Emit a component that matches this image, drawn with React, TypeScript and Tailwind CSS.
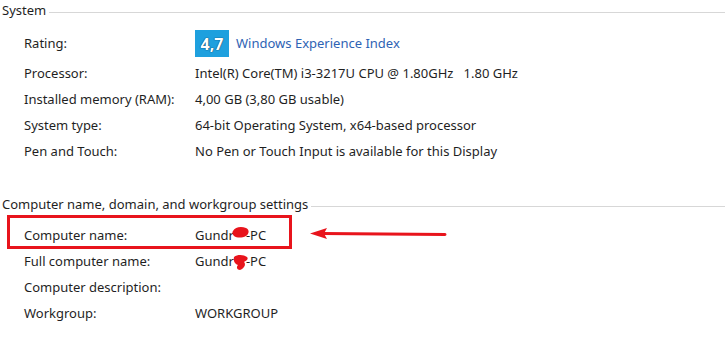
import React from 'react';

/* ── Section heading with a rule ── */
function Heading({ title, className }: { title: string; className?: string }) {
  return (
    <div className={`flex items-center h-[22px] ${className ?? ''}`}>
      <span className="pl-[2px] pr-[3px] text-[#1f1f1f]">{title}</span>
      <div className="flex-1 h-px bg-[#d7d7d7] mt-[2px]" />
    </div>
  );
}

/* ── Label / value row ── */
function Row({ label, children }: { label: string; children?: React.ReactNode }) {
  return (
    <div className="grid grid-cols-[171px_1fr] items-center h-[26px] pl-[24px] text-[#1f1f1f]">
      <span>{label}</span>
      <span className="relative">{children}</span>
    </div>
  );
}

/* red marker blot hiding part of the name */
function Blot({ className, d }: { className: string; d: string }) {
  return (
    <svg className={`absolute ${className}`} width="20" height="18" viewBox="0 0 20 18">
      <path d={d} fill="#e8141c" />
    </svg>
  );
}

function MaskedName({ blot, d }: { blot: string; d: string }) {
  return (
    <>
      Gundr<span className="inline-block w-[12px]" />-PC
      <Blot className={blot} d={d} />
    </>
  );
}

export default function App() {
  return (
    <div
      className="relative w-[725px] h-[343px] bg-white overflow-hidden text-[13px]"
      style={{ fontFamily: '"Noto Sans", "Open Sans", sans-serif' }}
    >
      <Heading title="System" />

      <div className="grid grid-cols-[171px_1fr] items-center h-[27px] pl-[24px] mt-[8px] text-[#1f1f1f]">
        <span>Rating:</span>
        <span className="flex items-center gap-[7px]">
          <span className="w-[34px] h-[27px] bg-[#1ea0de] text-white font-bold text-[16px] flex items-center justify-center [text-shadow:0_0_1px_#0b3f66,0_0_1px_#0b3f66]">
            4,7
          </span>
          <span className="text-[#2e63b4]">Windows Experience Index</span>
        </span>
      </div>

      <div className="mt-[4px]">
        <Row label="Processor:">Intel(R) Core(TM) i3-3217U CPU @ 1.80GHz&nbsp;&nbsp; 1.80 GHz</Row>
        <Row label="Installed memory (RAM):">4,00 GB (3,80 GB usable)</Row>
        <Row label="System type:">64-bit Operating System, x64-based processor</Row>
        <Row label="Pen and Touch:">No Pen or Touch Input is available for this Display</Row>
      </div>

      <Heading title="Computer name, domain, and workgroup settings" className="mt-[29px]" />

      <div className="mt-[7px]">
        <Row label="Computer name:">
          <MaskedName
            blot="left-[36px] top-[-1px]"
            d="M2 6 C4 2, 10 1, 15 3 C19 5, 18 9, 15 11 C11 13, 6 13, 3 11 C1 9, 1 7, 2 6 Z"
          />
        </Row>
        <Row label="Full computer name:">
          <MaskedName
            blot="left-[36px] top-[1px]"
            d="M3 4 C7 1, 13 2, 16 4 C18 6, 15 8, 13 9 C15 11, 14 15, 9 17 C6 17, 5 14, 7 12 C4 11, 2 8, 3 4 Z"
          />
        </Row>
        <Row label="Computer description:" />
        <Row label="Workgroup:">WORKGROUP</Row>
      </div>

      {/* annotation: red box + arrow */}
      <div className="absolute left-[7px] top-[215px] w-[285px] h-[34px] border-[3px] border-[#e8141c]" />
      <svg className="absolute left-[308px] top-[226px]" width="140" height="16" viewBox="0 0 140 16">
        <path d="M14 7.5 L137 8.5" stroke="#e8141c" strokeWidth="3" strokeLinecap="round" />
        <path d="M2 7.5 L19 2 L16 7.5 L19 13 Z" fill="#e8141c" />
      </svg>
    </div>
  );
}
